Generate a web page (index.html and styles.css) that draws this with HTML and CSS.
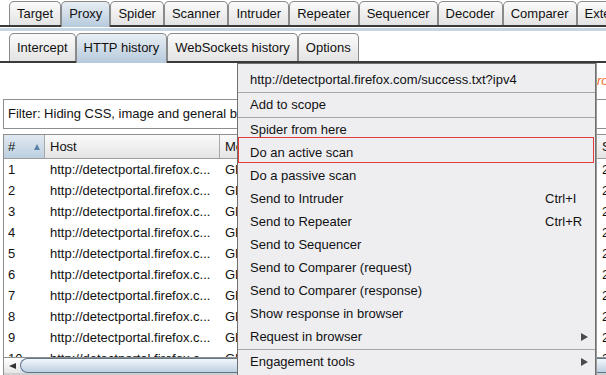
FILE: index.html
```html
<!DOCTYPE html>
<html lang="en">
<head>
  <meta charset="UTF-8" />
  <title>Proxy - HTTP history</title>
  <link rel="stylesheet" href="styles.css">
</head>
<body>
  <div class="window">
    <div class="tabs main-tabs">
      <div class="tab">Target</div>
      <div class="tab selected">Proxy</div>
      <div class="tab">Spider</div>
      <div class="tab">Scanner</div>
      <div class="tab">Intruder</div>
      <div class="tab">Repeater</div>
      <div class="tab">Sequencer</div>
      <div class="tab">Decoder</div>
      <div class="tab">Comparer</div>
      <div class="tab">Extender</div>
    </div>
    <div class="pane-strip"></div>
    <div class="tabs sub-tabs">
      <div class="tab">Intercept</div>
      <div class="tab selected">HTTP history</div>
      <div class="tab">WebSockets history</div>
      <div class="tab">Options</div>
    </div>

    <div class="content">
      <div class="notice">Logging of out-of-scope Proxy traffic is disabled</div>
      <div class="filter">Filter: Hiding CSS, image and general binary content</div>

      <div class="table">
        <div class="row head">
          <div class="cell sorted">#<span class="sort-arrow"></span></div>
          <div class="cell">Host</div>
          <div class="cell">Method</div>
          <div class="cell">Status</div>
        </div>
        <div class="rows">
          <div class="row"><div class="cell">1</div><div class="cell">http://detectportal.firefox.c...</div><div class="cell">GET</div><div class="cell">200</div></div>
          <div class="row"><div class="cell">2</div><div class="cell">http://detectportal.firefox.c...</div><div class="cell">GET</div><div class="cell">200</div></div>
          <div class="row"><div class="cell">3</div><div class="cell">http://detectportal.firefox.c...</div><div class="cell">GET</div><div class="cell">200</div></div>
          <div class="row"><div class="cell">4</div><div class="cell">http://detectportal.firefox.c...</div><div class="cell">GET</div><div class="cell">200</div></div>
          <div class="row"><div class="cell">5</div><div class="cell">http://detectportal.firefox.c...</div><div class="cell">GET</div><div class="cell">200</div></div>
          <div class="row"><div class="cell">6</div><div class="cell">http://detectportal.firefox.c...</div><div class="cell">GET</div><div class="cell">200</div></div>
          <div class="row"><div class="cell">7</div><div class="cell">http://detectportal.firefox.c...</div><div class="cell">GET</div><div class="cell">200</div></div>
          <div class="row"><div class="cell">8</div><div class="cell">http://detectportal.firefox.c...</div><div class="cell">GET</div><div class="cell">200</div></div>
          <div class="row"><div class="cell">9</div><div class="cell">http://detectportal.firefox.c...</div><div class="cell">GET</div><div class="cell">200</div></div>
          <div class="row"><div class="cell">10</div><div class="cell">http://detectportal.firefox.c...</div><div class="cell">GET</div><div class="cell">200</div></div>
        </div>
        <div class="hscroll">
          <div class="scroll-btn"><span class="left-arrow"></span></div>
          <div class="scroll-thumb"></div>
        </div>
      </div>
    </div>

    <!-- context menu on the selected row -->
    <div class="menu">
      <div class="item">http://detectportal.firefox.com/success.txt?ipv4</div>
      <div class="sep"></div>
      <div class="item">Add to scope</div>
      <div class="sep"></div>
      <div class="item">Spider from here</div>
      <div class="item marked">Do an active scan</div>
      <div class="item">Do a passive scan</div>
      <div class="item"><span>Send to Intruder</span><span>Ctrl+I</span></div>
      <div class="item"><span>Send to Repeater</span><span>Ctrl+R</span></div>
      <div class="item">Send to Sequencer</div>
      <div class="item">Send to Comparer (request)</div>
      <div class="item">Send to Comparer (response)</div>
      <div class="item">Show response in browser</div>
      <div class="item"><span>Request in browser</span><span></span><span class="sub-arrow"></span></div>
      <div class="sep"></div>
      <div class="item"><span>Engagement tools</span><span></span><span class="sub-arrow"></span></div>
    </div>
  </div>
</body>
</html>
```

FILE: styles.css
```css
* {
  box-sizing: border-box;
}

body {
  margin: 0;
  font-family: "Liberation Sans", Arial, sans-serif;
  font-size: 13px;
  color: #111;
  background: #fff;
}

.window {
  position: relative;
  width: 606px;
  height: 375px;
  overflow: hidden;
  background: #fff;
}

/* tab strips */
.tabs {
  display: flex;
  padding-left: 9px;
  border-bottom: 2px solid #3a3a3a;
}
.main-tabs {
  height: 27px;
  padding-top: 1px;
}
.sub-tabs {
  height: 30px;
}
.tab {
  flex: none;
  padding: 0 7px;
  border: 1px solid #8a8a8a;
  border-bottom: none;
  border-radius: 5px 5px 0 0;
  background: linear-gradient(#fbfbfb, #e3e3e3);
  white-space: nowrap;
}
.main-tabs .tab {
  line-height: 23px;
}
.sub-tabs .tab {
  line-height: 27px;
}
.tab.selected {
  background: linear-gradient(#e8eef4, #b6cadc);
  margin-bottom: -2px;
}
.pane-strip {
  height: 3px;
  margin: 1px 0 2px;
  background: #c6d5e4;
}

/* history panel */
.content {
  width: 700px;
}
.notice {
  height: 36px;
  line-height: 36px;
  padding-left: 448px;
  color: #f26a2c;
  font-style: italic;
  white-space: nowrap;
}
.filter {
  height: 30px;
  margin-left: 3px;
  padding-left: 4px;
  line-height: 28px;
  border: 1px solid #8e8e8e;
  border-right: none;
  white-space: nowrap;
}

.table {
  margin: 5px 0 0 3px;
  border-top: 1px solid #8e8e8e;
  border-left: 1px solid #8e8e8e;
}
.row {
  display: grid;
  grid-template-columns: 40px 175px 377px 100px;
  height: 21px;
  line-height: 21px;
}
.cell {
  padding-left: 5px;
  border-left: 1px solid transparent;
  white-space: nowrap;
  overflow: hidden;
}
.cell:first-child {
  padding-left: 4px;
  border-left: none;
}
.row.head {
  height: 24px;
  line-height: 23px;
  border-bottom: 1px solid #9c9c9c;
  background: linear-gradient(#fafafa, #e4e4e4);
}
.row.head .cell {
  border-left-color: #a9a9a9;
}
.row.head .sorted {
  display: flex;
  align-items: center;
  justify-content: space-between;
  padding-right: 4px;
  background: linear-gradient(#e1e9f1, #bccfe0);
}
.sort-arrow {
  width: 0;
  height: 0;
  border-left: 3px solid transparent;
  border-right: 3px solid transparent;
  border-bottom: 6px solid #5b80a6;
}
.rows {
  height: 198px;
  overflow: hidden;
}

.hscroll {
  display: flex;
  height: 18px;
  border-top: 1px solid #8e8e8e;
  border-bottom: 2px solid #cfcfcf;
  background: linear-gradient(#f6f9fc, #d3e0ec);
}
.scroll-btn {
  width: 16px;
  display: flex;
  align-items: center;
  justify-content: center;
  background: linear-gradient(#ffffff, #e6e6e6);
}
.left-arrow {
  width: 0;
  height: 0;
  border-top: 3px solid transparent;
  border-bottom: 3px solid transparent;
  border-right: 7px solid #333;
}
.scroll-thumb {
  flex: 1;
  margin-right: -10px;
  border: 1px solid #62768a;
  border-right: none;
  border-radius: 8px 0 0 8px;
  background: linear-gradient(#f3f7fb, #bdd0e2);
}

/* popup menu */
.menu {
  position: absolute;
  left: 237px;
  top: 63px;
  width: 359px;
  padding: 4px 0 12px;
  border: 1px solid #6f6f6f;
  background: #eeeef1;
  box-shadow: 1px 0 0 #9a9a9a;
}
.item {
  position: relative;
  display: grid;
  grid-template-columns: 295px 36px 1fr;
  align-items: center;
  height: 23px;
  line-height: 23px;
  padding-left: 12px;
  white-space: nowrap;
}
.item.marked::after {
  content: "";
  position: absolute;
  left: 0;
  right: 1px;
  top: -4px;
  bottom: 1px;
  border: 1px solid #e23c3c;
}
.sep {
  height: 2px;
  border-bottom: 1px solid #a6a6aa;
}
.sub-arrow {
  width: 0;
  height: 0;
  border-top: 4px solid transparent;
  border-bottom: 4px solid transparent;
  border-left: 7px solid #4a4a4a;
}
```
